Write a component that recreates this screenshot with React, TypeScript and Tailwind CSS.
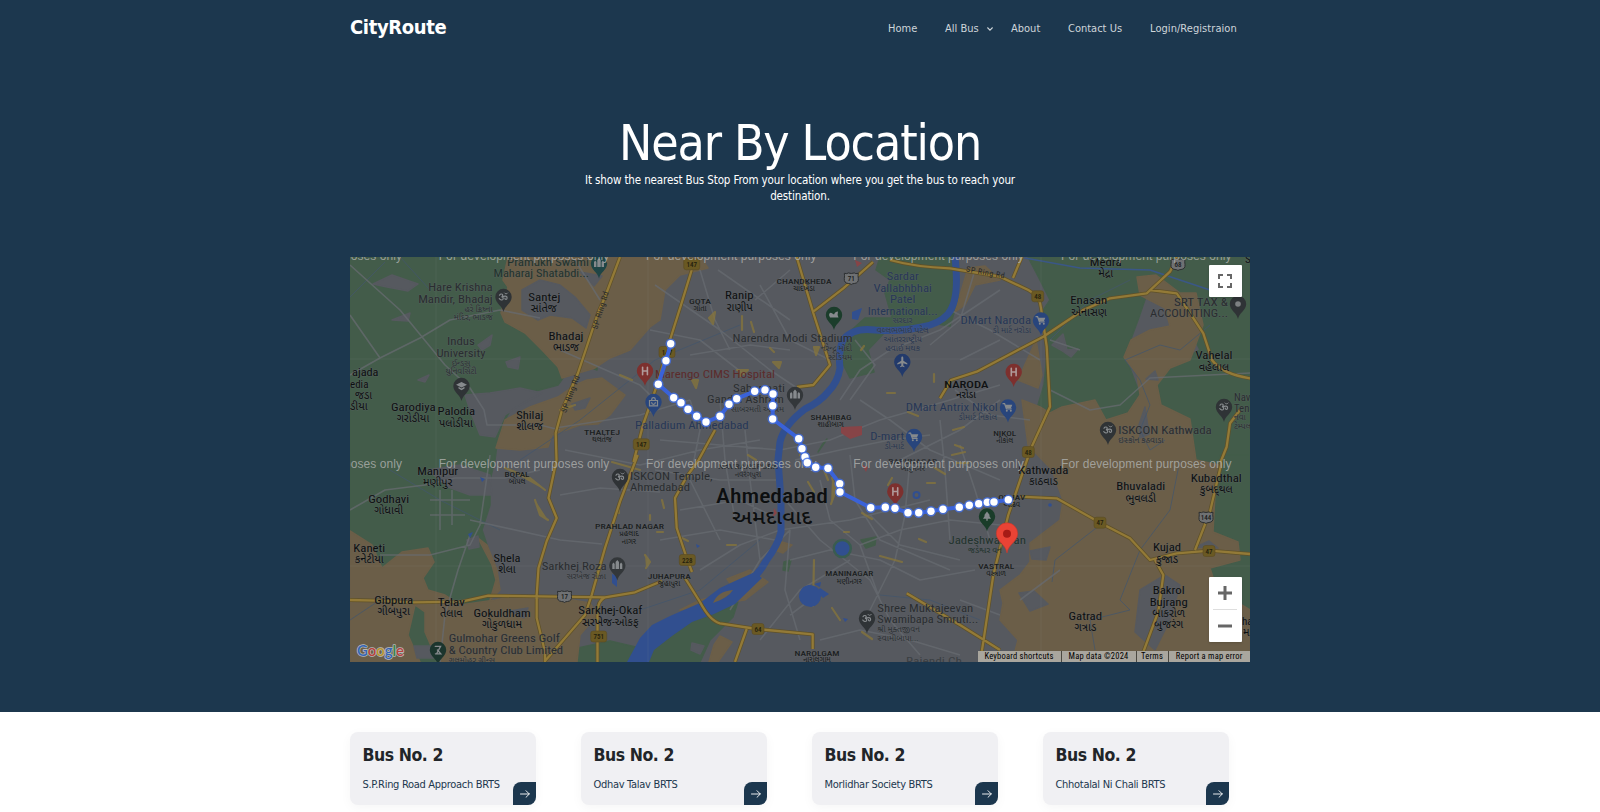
import React from "react";

type Anchor = "start" | "middle" | "end";
type Label = [text: string, x: number, y: number, anchor?: Anchor, width?: number];

const TAHOMA = "font-['DejaVu_Sans_Condensed','DejaVu_Sans',sans-serif] [font-stretch:condensed]";

const route: [number, number][] = [
  [670.7, 343.7], [666, 360.7], [658.3, 384.3], [673.7, 397.7], [681, 402.7], [688, 409.3], [696.7, 416.3],
  [706, 422], [720, 416.3], [729, 404.3], [736.7, 398.7], [754.7, 391.3], [765, 390], [773, 394], [772.7, 405.7],
  [772.7, 419], [798.7, 438.7], [802, 448.7], [805, 457], [807.3, 462.7], [815.7, 467.3], [828, 468.3],
  [839.7, 483.7], [840, 492], [870.7, 507.7], [885.3, 507.3], [895, 508.3], [908, 512.7], [918.7, 512.7],
  [931, 511.3], [943, 509.3], [959.3, 507.3], [969.3, 505.3], [978.7, 503.7], [987.3, 502.3], [994, 502],
  [1008.3, 499.7],
];

const towns: Label[] = [
  ["Santej", 544.3, 301, "middle", 32], ["સાંતેજ", 543.7, 312],
  ["Bhadaj", 566, 340, "middle", 35], ["ભાડજ", 566, 351],
  ["Garodiya", 413.3, 411, "middle", 44.5], ["ગરોડીયા", 413, 422],
  ["Palodia", 456.3, 415, "middle", 37.5], ["પલોડીયા", 456, 426.5],
  ["Shilaj", 529.7, 419, "middle", 27], ["શીલજ", 529.7, 430],
  ["ajada", 352, 376.3, "start", 26.5], ["edia", 350, 387.5, "start"],
  ["જડા", 355, 398.5, "start"], ["ડીયા", 350, 409.5, "start"],
  ["Ranip", 739.3, 299, "middle", 28.5], ["રાણીપ", 739.7, 310.5],
  ["Enasan", 1088.7, 304, "middle", 37], ["એનાસણ", 1089, 315.5],
  ["Medra", 1105.7, 266, "middle", 32], ["મેદ્રા", 1105.7, 277],
  ["Vahelal", 1214, 359, "middle", 37], ["વહેલાલ", 1214, 370.5],
  ["Manipur", 437.7, 475, "middle", 41], ["મણીપુર", 437.7, 486],
  ["Godhavi", 388.7, 503, "middle", 41], ["ગોધાવી", 388.7, 514],
  ["Kaneti", 369.3, 551.5, "middle", 32], ["કનેટીયા", 369.3, 562.5],
  ["Gibpura", 393.7, 604, "middle", 39], ["ગીબપુરા", 393.7, 615],
  ["Telav", 451.3, 605.5, "middle", 27], ["તેલાવ", 451.3, 616.5],
  ["Gokuldham", 502, 616.5, "middle", 57], ["ગોકુળધામ", 502, 627.5],
  ["Shela", 507, 562, "middle", 27], ["શેલા", 507, 573],
  ["Sarkhej-Okaf", 610.3, 613.5, "middle", 64], ["સરખેજ-ઓકફ", 610.3, 625.5],
  ["Kathwada", 1043.3, 473.5, "middle", 50], ["કાઠવાડ", 1043.3, 485],
  ["Bhuvaladi", 1140.7, 490, "middle", 49], ["ભુવલડી", 1140.7, 501.5],
  ["Kubadthal", 1216.3, 481.5, "middle", 51], ["કુબદ્થલ", 1216.3, 492.5],
  ["Kujad", 1167, 551, "middle", 28], ["કુજાડ", 1167, 562.5],
  ["Bakrol", 1168.7, 594, "middle", 32], ["Bujrang", 1168.7, 605.5, "middle", 38],
  ["બાકરોળ", 1168.7, 616.5], ["બુજરંગ", 1168.7, 628],
  ["Gatrad", 1085.3, 620, "middle", 33.5], ["ગત્રાડ", 1085.3, 631],
  ["ha", 1242, 624.5, "start"], ["મ", 1243, 635.5, "start"],
  ["S", 1245, 263, "start"],
];

const districts: Label[] = [
  ["GOTA", 700, 303.5, "middle", 22], ["ગોતા", 700, 310.5],
  ["CHANDKHEDA", 804, 283.5, "middle", 55], ["ચાંદખેડા", 804, 291],
  ["THALTEJ", 602, 434.5, "middle", 36], ["થલતેજ", 602, 441.5],
  ["SHAHIBAG", 831, 419.5, "middle", 41], ["શાહીબાગ", 830.5, 427],
  ["NIKOL", 1004.7, 435.5, "middle", 23], ["નીકોલ", 1004.7, 442.5],
  ["BOPAL", 517, 477, "middle", 25], ["બોપલ", 517, 484],
  ["PRAHLAD NAGAR", 629.5, 529, "middle", 69], ["પ્રહલાદ", 629, 536], ["નાગર", 629, 543.5],
  ["JUHAPURA", 669.3, 579, "middle", 43], ["જુહાપુરા", 669, 586],
  ["MANINAGAR", 849.3, 576, "middle", 48], ["મણીનગર", 849.3, 583.5],
  ["NAROLGAM", 817, 655.5, "middle", 45], ["નારોલગામ", 817, 662],
  ["VASTRAL", 996.3, 568.5, "middle", 36], ["વસ્ત્રાળ", 996, 576],
  ["ODHAV", 1011.7, 499.5, "middle", 27], ["ઓઢવ", 1011.7, 506.5],
];

const fadedDistricts: Label[] = [
  ["NAVRANGPURA", 748, 469, "middle", 60], ["નવરંગપુરા", 748, 477],
  ["BAPUNAGAR", 912.7, 463.5, "middle", 49], ["બાપુનગર", 912.7, 471],
];

const greyPlaces: Label[] = [
  ["Hare Krishna", 492.7, 291, "end", 64.5], ["Mandir, Bhadaj", 492.7, 302.5, "end", 74.5],
  ["Indus", 461, 345, "middle", 28], ["University", 461, 356.5, "middle", 49],
  ["Sabarmati", 733, 392, "start", 52], ["Gandhi Ashram", 707, 403, "start", 77],
  ["Narendra Modi Stadium", 732.5, 341.8, "start", 120],
  ["SRT TAX &", 1228, 305.5, "end", 54], ["ACCOUNTING...", 1228, 317, "end", 78],
  ["ISKCON Kathwada", 1118.3, 433.8, "start", 93.5],
  ["Nav", 1234, 400.5, "start"], ["Ten", 1234, 411.5, "start"],
  ["ISKCON Temple,", 630, 480, "start", 82.5], ["Ahmedabad", 630, 491, "start", 60],
  ["Sarkhej Roza", 606.7, 569.5, "end", 65],
  ["Gulmohar Greens Golf", 448.7, 642, "start", 111], ["& Country Club Limited", 448.7, 653.5, "start", 114.5],
  ["Shree Muktajeevan", 877.3, 611.5, "start", 96], ["Swamibapa Smruti...", 877.3, 623, "start", 101],
];

const greyNative: Label[] = [
  ["હરે ક્રિષ્ના", 492.7, 311.5, "end"], ["મંદિર, ભાડજ", 492.7, 320, "end"],
  ["ઈન્ડસ", 461, 365.5], ["યુનિવર્સિટી", 461, 374],
  ["સાબરમતી આશ્રમ", 784, 412, "end"],
  ["નરેન્દ્ર મોદી", 852, 351, "end"], ["સ્ટેડિયમ", 852, 360, "end"],
  ["ઇસ્કોન કઠવાડા", 1118.3, 443, "start"], ["નવા", 1234, 420, "start"], ["ટેમ્પલ", 1234, 428.5, "start"],
  ["સરખેજ રોઝા", 606, 578.5, "end"],
  ["ગુલમોહર ગ્રીન્સ", 448.7, 662.5, "start"],
  ["શ્રી મુક્તજીવન", 877.3, 632, "start"], ["સ્વામીબાપા...", 877.3, 640.5, "start"],
];

const bluePlaces: Label[] = [
  ["Palladium Ahmedabad", 635, 429, "start", 113.7],
  ["Sardar", 902.7, 280, "middle", 32], ["Vallabhbhai", 902.7, 291.5, "middle", 58.5],
  ["Patel", 902.7, 303, "middle", 25.5], ["International...", 902.7, 314.5, "middle", 70],
  ["DMart Naroda", 1031, 324, "end", 70.5], ["DMart Antrix Nikol", 997.7, 411, "end", 92],
  ["D-mart", 904.3, 440, "end", 34],
];

const blueNative: Label[] = [
  ["સરદાર", 902.7, 323], ["વલ્લભભાઈ પટેલ", 902.7, 332.5], ["આંતરરાષ્ટ્રીય", 902.7, 341.5], ["હવાઈ મથક", 902.7, 350.5],
  ["ડી માર્ટ નરોડા", 1031, 333, "end"], ["ડીમાર્ટ નિકોલ", 997, 419.5, "end"], ["ડી-માર્ટ", 904, 449, "end"],
];

const darkGreenPlaces: Label[] = [
  ["Pramukh Swami", 589, 266, "end", 82], ["Maharaj Shatabdi...", 589, 277, "end", 95.5],
  ["Jadeshwar Van", 948.5, 544, "start", 77.5],
];

function Labels({ items, className }: { items: Label[]; className: string }) {
  return (
    <g className={className} strokeLinejoin="round" style={{ paintOrder: "stroke" }}>
      {items.map(([text, x, y, anchor = "middle", width], i) => (
        <text key={i} x={x} y={y} textAnchor={anchor} textLength={width} lengthAdjust="spacingAndGlyphs">
          {text}
        </text>
      ))}
    </g>
  );
}

type Glyph = "dot" | "om" | "H" | "cart" | "plane" | "fort" | "cap" | "bag" | "tree" | "golf" | "field";

function PinGlyph({ kind }: { kind: Glyph }) {
  const line = { fill: "none", stroke: "#868a8d", strokeWidth: 1.2, strokeLinecap: "round" as const };
  const solid = { fill: "#868a8d" };
  switch (kind) {
    case "H":
      return <path d="M-2.4-3.8V3.8M2.4-3.8V3.8M-2.4 0H2.4" {...line} strokeWidth={1.6} stroke="#b09a9a" />;
    case "cart":
      return (
        <g>
          <path d="M-5-3.8H-3.4L-1.6 1.3H3.2" {...line} />
          <path d="M-3-2.8H4.3L3 .6H-1.8Z" {...solid} />
          <circle cx="-1.2" cy="3.3" r="1" {...solid} />
          <circle cx="2.8" cy="3.3" r="1" {...solid} />
        </g>
      );
    case "plane":
      return <path d="M0-5.5C.7-5.5 1-4.8 1-4V-1.2L5 1.3V2.4L1 1.2V3.4L2.2 4.4V5.2L0 4.6L-2.2 5.2V4.4L-1 3.4V1.2L-5 2.4V1.3L-1-1.2V-4C-1-4.8-.7-5.5 0-5.5Z" {...solid} />;
    case "fort":
      return <path d="M-5 3.5V-1.5L-3.8-3L-2.6-1.500V3.500ZM-1.700 3.500V-3.500L0-5.500L1.700-3.500V3.500ZM2.600 3.500V-1.500L3.800-3L5-1.500V3.500Z" {...solid} />;
    case "cap":
      return <path d="M0-4L5.5-1.2L0 1.6L-5.5-1.2ZM-3 .8V2.6L0 4.2L3 2.6V.8L0 2.4Z" {...solid} />;
    case "bag":
      return (
        <g>
          <path d="M-4-1.5H4V3.8H-4Z" {...line} />
          <path d="M-1.8-1.5V-2.6A1.8 1.8 0 0 1 1.8-2.6V-1.5M-1.8 .5A1.8 1.8 0 0 0 1.8 .5" {...line} />
        </g>
      );
    case "tree":
      return <path d="M0-5L3-1H2L4 2.3H.7V4.3H-.7V2.3H-4L-2-1H-3Z" {...solid} />;
    case "golf":
      return <path d="M-2.800-3.700H2.600L-1.400 3.800M-.6 0L2.800 3.800H-2.600" {...line} strokeWidth={1.3} />;
    case "field":
      return <path d="M-5 0Q-4.500-3-2.500-2L0-.5Q1-3.500 4-3.500Q3 0 4.500 2.500H-4Z" {...solid} />;
    case "om":
      return (
        <g>
          <path d="M-4-1.8C-3-3.6-.6-3.2-.8-1.6C-.9-.5-2-.2-2-.2C-.5-.2 0 1-.5 2.2C-1.2 3.6-3.6 3-4.2 1.6M-.8 .2C.8-1.5 3.8-1 3.6 1C3.4 3 1.4 2.6 1.4 1.2" {...line} />
          <path d="M1-4A1.8 1.5 0 0 0 4.2-4" {...line} strokeWidth={1} />
        </g>
      );
    default:
      return <circle r="2.8" fill="#7d8082" />;
  }
}

const pins: [number, number, string, Glyph][] = [
  [503.5, 297, "#2f3336", "om"], [599, 263.5, "#1f4546", "fort"], [461.5, 386, "#2f3336", "cap"],
  [645, 371, "#7d302e", "H"], [653.5, 402, "#28457c", "bag"], [795, 395, "#33373a", "fort"],
  [834, 315, "#1b3d2b", "field"], [902.3, 362, "#223a6b", "plane"], [1041, 320.5, "#28457c", "cart"],
  [1013.7, 372, "#7d302e", "H"], [1008, 407.5, "#28457c", "cart"], [914, 437, "#28457c", "cart"],
  [1238, 304, "#2f3336", "dot"], [1108, 430, "#2f3336", "om"], [1224, 407, "#2f3336", "om"],
  [620, 477, "#2f3336", "om"], [617.3, 565.5, "#33373a", "fort"], [438, 650, "#1b352d", "golf"],
  [867, 618.5, "#2f3336", "om"], [895.3, 491.5, "#7d302e", "H"], [987, 516.5, "#1a3c29", "tree"],
];

const shields: [string, number, number, boolean][] = [
  ["147", 691.7, 264.3, false], ["147", 667, 352, false], ["147", 641.3, 444.3, false],
  ["48", 1037.7, 296.3, false], ["48", 1028.3, 452, false], ["47", 1100, 522.7, false], ["47", 1209, 551, false],
  ["228", 687.3, 560, false], ["64", 758, 629, false], ["751", 598.7, 636.5, false],
  ["71", 851.3, 278.5, true], ["68", 1178, 264.5, true], ["144", 1206, 517.5, true], ["17", 564.5, 596.5, true],
];

const arterials = `
M620 257L605 297L598 313L578 373L562 410L555.7 433L556.5 460L548.5 498L556.7 518L546.7 541L538.5 568L536.7 595V618L545 652V663
M637.7 455L620 501.7L605 548L591.7 595L585 615L545 661
M691.7 270L681 305L670 340L657 385L643 425L633.5 462
M350 600L378 600.7L411.7 602.3L461.7 601.7L488.3 595.7L605 597.3L635 592.3L662 581
M605 597.3Q597.5 601 597.5 612V662
M715 430L698 461L687 476L675 498L676.7 528L686.7 558L692 572
M685 578L700 602Q710 621 720 623.3L756.7 629L812.7 634.3V649
M746.7 629L735 662
M796.7 257L813.3 313L830 365L813.3 385L797 387
M813.3 311.7L843.3 288.3L873 262
M890 260Q915 267 950 268.3L1000 276.7L1028.3 290Q1040 296 1041 308L1046.7 346.7L1050 406.7L1031.7 446.7L1028 457L1008.3 515L993.3 575L983.3 642L981.7 652
M1021.7 257L1013 278
M940 398.3L951 380L976.7 371.7L1043.3 336.7L1083.3 310L1110 298.3L1146.7 293.3L1170 271.7L1177 257
M1150 290L1176.7 293.3L1190 313L1203.3 333.3L1212 360Q1222 374 1250 378.3
M1240 410L1230 423.3L1226.7 446.7L1221 461V465L1210 511.7L1195 550
M1020 496.7L1056.7 498.3L1100 522.7L1130 538.3L1150 560L1176.7 553.3L1210 550.7L1250 554
M1155 560L1163.3 575L1158.3 611.7L1143.3 652
M906.7 593.3L960 625L1000 650`;

const streets = `
M350 265L400 310L445 365L470 388L484 410L487 425H540L560 430
M350 375L380 358L420 338L450 320L500 310L540 318
M350 315L380 358
M350 510L385 490L425 485L455 478H505L540 470
M380 555H430L470 545L480 525L490 455
M470 520L560 540L602 544
M440 662L445 615L458 570L470 535
M430 500H470M430 515H465M440 490V530M452 490V525
M575 260L600 300M560 350L640 385L655 400
M555 428L640 415L690 400M560 495L600 488L660 492
M565 450L640 465L700 450L760 440
M655 285L720 330L770 370L800 390
M700 270L715 320L730 350M755 300L790 270
M760 285L790 340L830 360M718 270L790 320
M690 355L750 345L790 350M650 330L700 340L745 375
M690 400L700 430L690 480L720 540M720 400L725 460L735 520
M660 440L720 445L780 450M655 470L720 480L780 480
M680 510L740 500L770 515M660 540L720 530L775 540
M700 570L740 545L780 530L850 520L930 500
M745 430L750 480L760 560M790 530L785 590L800 640
M780 450L830 440L880 420L950 400L1000 385
M785 500L820 540L870 580L890 620L920 655
M820 480L830 520L860 545L880 600
M795 460L840 450L890 440L930 435
M790 560L830 550L880 560L920 580L975 570
M850 455L855 500L880 540L950 570
M870 515L900 545L960 560M910 460L905 515L895 560L865 620
M940 420L945 470L950 540M960 445L975 490L990 540
M840 400L860 370L890 350L940 330L1000 290
M860 400L890 420L930 450L1000 480
M855 340L875 365L850 400M930 345L960 320L975 270
M1000 400L960 430L900 460M955 390L990 415L1030 420
M950 310L990 330L1040 360M960 360L1000 340
M760 640L800 590L850 560M730 610L760 560L790 530
M820 640L860 630L910 640L960 655M810 600L790 615
M860 545L900 530L950 520L1000 525
M1050 390L1090 410L1120 405L1150 378L1250 373
M1050 340L1080 350
M1020 600L1060 570M960 600L1000 615`;

const creeks = `
M350 297L385 262M520 460L580 420L655 360L740 325
M500 530L440 500L390 470M1050 340L1090 300L1130 280
M1125 360L1140 380L1150 405L1140 430L1150 450L1165 440M1125 360L1160 345L1180 350L1210 325
M1180 460L1170 510L1140 550L1120 600L1130 610L1090 620L1095 650
M1100 525L1055 560L1052 582
M350 620L380 600M640 610L700 590L760 540
M880 595L930 600L980 620M400 257L430 290`;

const yellowBits = `
M709 318L715 312L713 324ZM742 316V330M773 362H781L779 368ZM737 370L748 370L740 376M692 380L698 380L696 388ZM751 322L754 332M814 347L819 347L816 355Z
M748 455L756 460M800 455L810 462M832 478L836 490L831 504M824 470L828 480M808 482L814 492
M662 500L664 508M727 545H736M657 532H663M645 555L650 562L646 568M814 560L813 606M844 532H849M919 539L926 542M880 556L902 562M832 608L840 620
M887 393H895M934 374V382M908 412L918 416M953 430L964 427M935 468L945 474M892 478L888 485M862 513L872 519M927 483H935M957 463H968
M535 500L540 515L548 520M505 468L530 478L545 490M862 632L872 639M861 350L864 346M770 348L774 352M682 538L688 541M952 455L965 452M955 445L963 448
M612 462L640 470M618 505L619 513M650 515V520M560 410L575 405M620 375L632 380`;

function MapCanvas() {
  return (
    <svg viewBox="350 257 900 405" className="block h-full w-full font-[Roboto,'Noto_Sans_Gujarati','Noto_Sans',sans-serif]" aria-label="Map of Ahmedabad">
      <rect x="350" y="257" width="900" height="405" fill="#56595f" />
      <g fill="#435c4a" stroke="#435c4a" strokeWidth="1.5" strokeLinejoin="round">
        <path d="M350 257H508L503 280L508 287L501 313L505 322L525 333L542 350L558 367L563 378L558 385L532 392L526 400L512 407L505 420L498 437L495 460L490 480V505L482 530L487 545L495 580L490 605L480 640L470 662H350Z" />
        <path d="M1028 257H1250V495H1219L1216 475L1196 460L1193 440L1163 410L1157 385L1165 368L1200 350L1190 330L1150 285L1138 320L1125 355L1140 395L1128 413L1106 420L1095 403L1062 407L1050 413L1038 405L1044 385L1048 345L1040 315L1050 300L1040 280Z" />
        <path d="M880 257H955L958 300L950 326L925 322L885 332L868 350L874 372L850 378L842 362L846 335L865 318L892 318L885 293L890 280L876 270Z" />
        <path d="M1220 455H1250V610L1217 590L1210 568L1240 560L1238 542L1213 532L1216 480Z" />
        <path d="M650 652L690 622L735 605L740 595L733 617L710 640L700 662H648Z" />
        <path d="M578 648L610 641L640 648L632 662H575Z" />
        <path d="M861 540L876 537L875 545L866 548ZM784 562L791 560L788 571L783 570ZM822 445L827 439L818 452ZM590 367L597 363V370Z" />
      </g>
      <g fill="#6b5e48" stroke="#6b5e48" strokeWidth="1.5" strokeLinejoin="round">
        <path d="M508 257H700L708 268L680 275L665 290L660 320L650 327L630 350L610 358L595 368L562 378L558 367L542 350L525 333L505 322L501 313L508 287L503 280Z" />
        <path d="M505 420L530 407L558 397L575 385L587 380L602 378L625 395L610 415L598 424L580 425L552 435L548 447L520 450L496 448Z" />
        <path d="M350 531L372 545L382 568L402 552L428 548L434 562L423 578L428 590L445 595L460 605L495 600L510 597H555L590 603L597 615L580 635L577 662H438L425 632V612L415 605L408 635L420 662H350Z" />
        <path d="M478 538L492 565L496 580L490 600L500 590L497 570L487 545Z" />
        <path d="M720 636L732 642L718 662H709L714 645ZM727 579L750 570L768 582L745 600L700 606L680 610L700 600L736 591ZM782 542L792 545L783 553L775 550Z" />
        <path d="M968 268L985 266L1000 280L975 285L965 305L955 312ZM1137 277L1156 275L1180 293H1196L1203 325L1190 360L1170 368L1157 385L1161 405L1190 419L1196 460L1219 465L1216 475L1213 532L1238 542L1240 560L1210 568L1217 590L1250 610V662H1012L1018 640L1000 620L1003 603L1000 590L1020 575L1030 562L1030 543L1060 520L1063 500L1052 470L1028 445L1022 400L1040 407L1050 413L1062 407L1095 400L1106 420L1128 413L1140 395L1137 375L1124 357L1131 340L1150 330L1170 326L1165 308L1140 295Z" />
        <path d="M1036 340L1042 375L1038 388L1018 380Z" />
      </g>
      <g fill="#56595f" stroke="#56595f" strokeWidth="1.5" strokeLinejoin="round">
        <path d="M373 284L392 275L418 284L408 291L387 287ZM392 320L410 313L408 321ZM478 345L492 335L490 345L482 350ZM506 362L520 357L518 369L508 367ZM418 380L429 375L425 382Z" />
        <path d="M465 395L490 393L520 388L542 393L520 405L505 415L495 437L480 435L470 410ZM522 290L540 280L560 285L575 297L590 315L586 328L572 318L550 315L538 320L522 310ZM580 272L602 276L594 286ZM572 404L590 398L585 408L575 410Z" />
        <path d="M428 470L460 465L490 475L492 495L470 495L448 487ZM467 540L478 536L479 547L469 549ZM414 646L433 646L438 658H417ZM510 611L528 608L524 618ZM692 643L704 646L700 654L691 650Z" />
        <path d="M1140 590L1165 575L1180 585L1170 620L1155 650L1135 632ZM1019 593L1034 591L1048 604L1030 611ZM1030 551L1050 547L1046 560L1032 559ZM1196 547L1209 541L1218 548Z" />
        <path d="M1052 345L1063 334L1067 350L1078 349L1071 357L1061 350ZM1139 425L1145 407L1149 434L1140 438ZM1146 379L1155 371L1158 380Z" />
      </g>
      <path d={creeks} fill="none" stroke="#43566c" strokeWidth="1" strokeLinejoin="round" opacity=".75" />
      <path d={streets} fill="none" stroke="#676b70" strokeWidth="1.6" strokeLinejoin="round" opacity=".75" />
      <path d={yellowBits} fill="#8a7738" stroke="#8a7738" strokeWidth="2.2" strokeLinejoin="round" strokeLinecap="round" opacity=".7" />

      <g fill="none" stroke="#314f8f" strokeLinecap="round" strokeLinejoin="round">
        <path d="M955 257Q960 300 948 314Q939 324 922 327Q900 332 875 330Q853 327 843 340Q838 352 840 368Q838 382 828 392Q820 402 805 409Q784 425 780 442L778 460L781 500V532Q778 545 766 561Q757 578 742 586" strokeWidth="7" />
        <path d="M1025 258L1080 268L1150 270L1210 290" strokeWidth="1.4" stroke="#3a5787" />
      </g>
      <path d="M755 572L735 581L720 588L700 603L670 616L652 625L640 638L627 662H649L654 650L672 636L692 622L714 614L735 604L762 578Z" fill="#314f8f" />
      <path d="M713 603Q718 591 733 590Q728 598 713 603Z" fill="#6b5e48" />
      <g fill="#314f8f">
        <path d="M799 597A11 11 0 1 1 811 607Q800 606 799 597ZM814 584L821 582L820 587ZM820 588L829 594L823 598L817 592ZM843 618L848 619L845 622ZM612 574L617 576V587L612 583ZM852 312L862 308L858 320L852 319ZM480 477L485 479L482 482ZM468 534L473 532L470 538ZM696 544L700 546L697 548Z" />
        <circle cx="842.3" cy="548.5" r="8.500" stroke="#3a5c50" strokeWidth="2.500" />
        <circle cx="916.5" cy="495" r="3" fill="none" stroke="#314f8f" strokeWidth="2" />
        <circle cx="1050" cy="505" r="1.800" />
      </g>
      <path d="M841 427L862 426L862 435L850 439L841 433Z" fill="#874447" />
      <path d="M855 260L862 263L857 267ZM774 508L777 513L773 517ZM862 465L868 467L866 472Z" fill="#874447" />

      <g fill="none" strokeLinejoin="round">
        <path d={arterials} stroke="#5f5129" strokeWidth="3.8" />
        <path d={arterials} stroke="#937a37" strokeWidth="2.300" />
      </g>
      <path d="M436 257V662M648 257V662M1041 257V662M350 359H1250M350 566H1250" stroke="#8d9193" strokeWidth=".5" opacity=".25" />

      <g fontSize="7" textAnchor="middle">
        {shields.map(([n, x, y, light], i) => (
          <g key={i} transform={`translate(${x} ${y})`}>
            {light ? (
              <path d="M-7-5.2Q-4-4.3-3-5.6Q0-4.4 3-5.6Q4-4.3 7-5.2Q6.5-3 7 0Q7.5 4.5 3 5Q1 5 0 6Q-1 5-3 5Q-7.5 4.5-7 0Q-6.5-3-7-5.2Z" fill="#6f7173" stroke="#2c2f31" strokeWidth="1" />
            ) : (
              <rect x={n.length > 2 ? -8 : -6} y="-5.5" width={n.length > 2 ? 16 : 12} height="11" rx="2.5" fill="#6a5923" stroke="#5a4c22" strokeWidth=".6" />
            )}
            <text y="2.6" fontWeight="500" fill={light ? "#17191a" : "#221d0d"}>{n}</text>
          </g>
        ))}
      </g>
      <g fontSize="8" fill="#27292b" textAnchor="middle">
        <text transform="translate(603 311) rotate(-73)" textLength="39">SP Ring Rd</text>
        <text transform="translate(573 395) rotate(-69)" textLength="39">SP Ring Rd</text>
        <text transform="translate(985 275) rotate(10)" textLength="39">SP Ring Rd</text>
      </g>

      <Labels items={greyPlaces} className="fill-[#2a2d30] stroke-[#61656a]/40 stroke-1 text-[10.8px]" />
      <Labels items={[["Rajendi Ch", 906, 664.5, "start", 56]]} className="fill-[#3b3f43] text-[10.8px]" />
      <Labels items={greyNative} className="fill-[#2d3134] stroke-[#61656a]/40 stroke-1 text-[8.500px]" />
      <Labels items={bluePlaces} className="fill-[#273756] stroke-[#61656a]/40 stroke-1 text-[10.8px]" />
      <Labels items={blueNative} className="fill-[#2a374f] stroke-[#61656a]/40 stroke-1 text-[8.500px]" />
      <Labels items={darkGreenPlaces} className="fill-[#22332d] stroke-[#61656a]/40 stroke-1 text-[10.8px]" />
      <Labels items={[["જડેશ્વર વન", 968, 553, "start"]]} className="fill-[#22332d] text-[8.500px]" />
      <Labels items={[["Marengo CIMS Hospital", 655, 378, "start", 120]]} className="fill-[#5c2b2b] text-[10.8px]" />
      <Labels items={districts} className="fill-[#1c1f21] stroke-[#61656a]/40 stroke-1 text-[7.300px] font-medium" />
      <Labels items={fadedDistricts} className="fill-[#2c2f32] text-[7.300px] font-medium" />
      <Labels items={towns} className="fill-[#0d0f10] stroke-[#61656a]/50 stroke-1 text-[11px]" />
      <Labels items={[["NARODA", 966.3, 387.5, "middle", 44], ["નરોડા", 966, 397.5]]} className="fill-[#0f1112] text-[9.500px] font-medium" />
      <Labels items={[["Ahmedabad", 772, 503, "middle", 112], ["અમદાવાદ", 772, 524, "middle", 80]]} className="fill-[#0d0f10] stroke-[#61656a]/50 stroke-1 text-[20.500px] font-medium" />

      {pins.map(([x, y, color, glyph], i) => (
        <g key={i} transform={`translate(${x} ${y})`}>
          <path d="M0 15C-1 9-8 6.5-8.2 0A8.2 8.2 0 1 1 8.2 0C8 6.5 1 9 0 15Z" fill={color} />
          <PinGlyph kind={glyph} />
        </g>
      ))}

      <g fontFamily="Liberation Sans, Arial, sans-serif" fontSize="12" fill="#b0b2b0" fillOpacity=".8">
        {[260, 467.5].flatMap((y) =>
          [231.5, 438.7, 646, 853.3, 1061].map((x) => (
            <text key={`${x}-${y}`} x={x} y={y} textLength="170.5">For development purposes only</text>
          )),
        )}
      </g>

      <polyline points={route.map((p) => p.join(",")).join(" ")} fill="none" stroke="#3a62d8" strokeWidth="4" strokeLinejoin="round" />
      {route.map(([x, y], i) => (
        <g key={i}>
          <circle cx={x} cy={y} r="5.200" fill="#4470e6" fillOpacity=".8" />
          <circle cx={x} cy={y} r="3.7" fill="#fff" />
        </g>
      ))}

      <path d="M1007 553C1005.5 544 996.5 542 996.3 533.5A10.7 10.7 0 0 1 1017.7 533.5C1017.5 542 1008.5 544 1007 553Z" fill="#ea4335" stroke="#c5372c" strokeWidth=".6" />
      <circle cx="1007" cy="533.7" r="4" fill="#a61b16" />

      <g fontFamily="Lato, sans-serif" fontSize="16" fontWeight="600" stroke="#b4b8bb" strokeWidth="1.6" strokeLinejoin="round" style={{ paintOrder: "stroke" }}>
        <text x="357" y="655.500" textLength="47" lengthAdjust="spacingAndGlyphs">
          <tspan fill="#3565b5">G</tspan><tspan fill="#b8423b">o</tspan><tspan fill="#b8942c">o</tspan>
          <tspan fill="#3565b5">g</tspan><tspan fill="#37824a">l</tspan><tspan fill="#b8423b">e</tspan>
        </text>
      </g>
    </svg>
  );
}

function MapControls() {
  return (
    <>
      <button className="absolute top-2 right-[8.500px] flex h-8 w-[32.500px] items-center justify-center rounded-[1px] bg-white shadow" aria-label="Toggle fullscreen view">
        <svg viewBox="0 0 14 14" className="h-3.5 w-3.5" fill="none" stroke="#666" strokeWidth="2">
          <path d="M1 5V1H5M9 1H13V5M13 9V13H9M5 13H1V9" />
        </svg>
      </button>
      <div className="absolute right-[8.500px] bottom-5 flex h-[65.500px] w-[32.500px] flex-col items-center rounded-[1px] bg-white shadow">
        <button className="flex w-full flex-1 items-center justify-center" aria-label="Zoom in">
          <svg viewBox="0 0 14 14" className="h-3.5 w-3.5" fill="none" stroke="#666" strokeWidth="3">
            <path d="M7 0V14M0 7H14" />
          </svg>
        </button>
        <div className="h-px w-6 bg-[#dedede]" />
        <button className="flex w-full flex-1 items-center justify-center" aria-label="Zoom out">
          <svg viewBox="0 0 14 14" className="h-3.5 w-3.5" fill="none" stroke="#666" strokeWidth="3">
            <path d="M0 7H14" />
          </svg>
        </button>
      </div>
      <div className="absolute right-0 bottom-0 flex h-[11.500px] w-[272.500px] divide-x divide-[#4a4841] bg-[#a9a69e] font-[Roboto,sans-serif] text-[8.500px] leading-[11px] tracking-[0.22px] whitespace-nowrap text-black">
        <span className="w-[84px] text-center">Keyboard shortcuts</span>
        <span className="w-[75px] text-center">Map data ©2024</span>
        <span className="w-8 text-center">Terms</span>
        <span className="flex-1 text-center">Report a map error</span>
      </div>
    </>
  );
}

const stops = ["S.P.Ring Road Approach BRTS", "Odhav Talav BRTS", "Morlidhar Society BRTS", "Chhotalal Ni Chali BRTS"];

function BusCard({ stop }: { stop: string }) {
  return (
    <article className="relative h-[73px] w-[186px] rounded-lg bg-[#f0f0f3] px-[12.500px] pt-3 shadow-[0_3px_12px_rgba(0,0,0,0.04)]">
      <h2 className="text-[17.500px] leading-[23px] font-bold tracking-[-0.45px] text-[#212529]">Bus No. 2</h2>
      <p className="mt-2.5 text-[11px] leading-4 tracking-[-0.3px] whitespace-nowrap text-[#1c374e]">{stop}</p>
      <a href="#" className="absolute right-0 bottom-0 flex h-[23px] w-[23px] items-center justify-center rounded-tl-lg rounded-br-lg bg-[#1c374e]" aria-label="Open">
        <svg viewBox="0 0 10 8" className="h-2 w-2.5" fill="none" stroke="#fff" strokeWidth=".9" strokeLinecap="round" strokeLinejoin="round">
          <path d="M.5 4H9.3M6 .7L9.3 4L6 7.3" />
        </svg>
      </a>
    </article>
  );
}

export default function App() {
  return (
    <div className={`h-[812px] overflow-hidden bg-white ${TAHOMA}`}>
      <section className="flex h-[712px] flex-col items-center bg-[#1c374e]">
        <header className="flex h-14 w-[900px] items-center justify-between pr-[13px]">
          <a href="#" className="-mt-0.5 text-[20px] font-bold tracking-[-0.35px] text-white">CityRoute</a>
          <nav className="mt-0.5 flex text-[11px] whitespace-nowrap text-[#ced5da]">
            <a href="#" className="w-[57px]">Home</a>
            <a href="#" className="flex w-[66px] items-center gap-2">
              All Bus
              <svg viewBox="0 0 6 4" className="h-1 w-1.5" fill="none" stroke="currentColor" strokeWidth="1.1">
                <path d="M.4 .5L3 3.1L5.6 .5" />
              </svg>
            </a>
            <a href="#" className="w-[57px]">About</a>
            <a href="#" className="w-[82px]">Contact Us</a>
            <a href="#" className="w-[87px] tracking-[0.06px]">Login/Registraion</a>
          </nav>
        </header>
        <div className="flex w-[450px] flex-col items-center pt-[58px] text-center text-white">
          <h1 className="text-[49.500px] leading-[58px] tracking-[-1.1px] whitespace-nowrap">Near By Location</h1>
          <p className="text-[11.500px] leading-4 tracking-[-0.13px]">
            It show the nearest Bus Stop From your location where you get the bus to reach your destination.
          </p>
        </div>
        <div className="relative mt-[53px] h-[405px] w-[900px] overflow-hidden">
          <MapCanvas />
          <MapControls />
        </div>
      </section>
      <section className="mx-auto flex w-[900px] gap-[45px] pt-5">
        {stops.map((stop) => (
          <div key={stop} className="shrink-0">
            <BusCard stop={stop} />
          </div>
        ))}
      </section>
    </div>
  );
}
